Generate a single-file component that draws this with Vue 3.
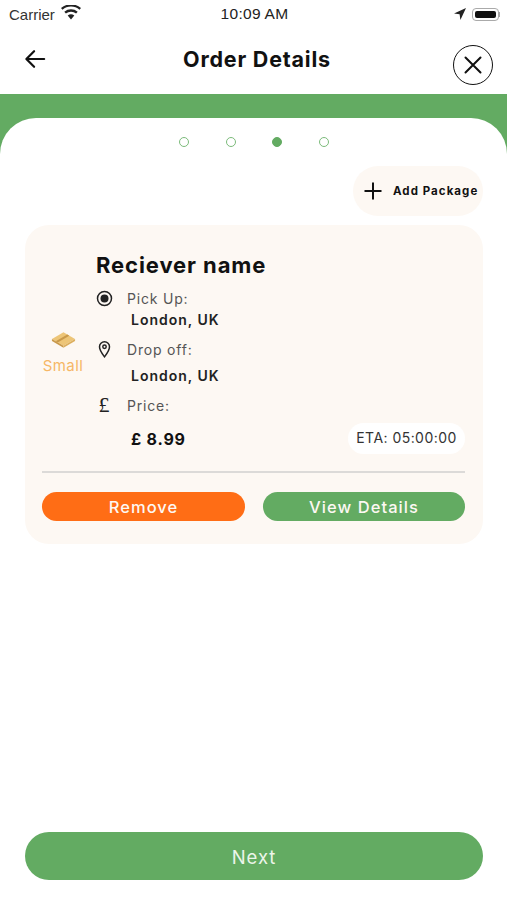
<script setup>
const dots = [false, false, true, false]
</script>

<template>
  <div class="screen">
    <div class="status">
      <div class="status-left">
        <span>Carrier</span>
        <svg class="wifi" width="20" height="15" viewBox="0 0 20 15"><path d="M10 14.500 6.700 10.600a5 5 0 0 1 6.600 0Z" fill="#222"/><path d="M4.900 8.600a7.800 7.800 0 0 1 10.200 0l1.600-1.900a10.400 10.400 0 0 0-13.400 0Z" fill="#222"/><path d="M1.500 4.700a13 13 0 0 1 17 0L20 3a15.400 15.400 0 0 0-20 0Z" fill="#222"/></svg>
      </div>
      <span class="time">10:09 AM</span>
      <div class="status-right">
        <svg width="14" height="14" viewBox="0 0 14 14"><path d="M13 1 1 6.600l5.600.7.8 5.700Z" fill="#222"/></svg>
        <div class="battery"><div class="battery-fill"></div></div>
        <div class="battery-cap"></div>
      </div>
    </div>

    <header class="nav">
      <svg class="back" width="22" height="22" viewBox="0 0 24 24" fill="none" stroke="#111" stroke-width="2.400" stroke-linecap="round" stroke-linejoin="round"><path d="M22 12H3M11 3.500 2.600 12l8.400 8.500"/></svg>
      <h1 class="title">Order Details</h1>
      <button class="close">
        <svg width="20" height="20" viewBox="0 0 20 20" fill="none" stroke="#111" stroke-width="2" stroke-linecap="round"><path d="M2.500 2.500l15 15M17.500 2.500l-15 15"/></svg>
      </button>
    </header>

    <main class="band">
      <div class="sheet">
        <div class="dots">
          <span v-for="(active, i) in dots" :key="i" class="dot" :class="{ active }"></span>
        </div>

        <div class="add-row">
          <button class="add">
            <svg width="20" height="20" viewBox="0 0 20 20" stroke="#111" stroke-width="2"><path d="M10 1.500v17M1.500 10h17"/></svg>
            <span>Add Package</span>
          </button>
        </div>

        <section class="card">
          <div class="card-top">
            <div class="size">
              <svg width="25" height="17" viewBox="0 0 26 17">
                <path d="M1 8 13 1l12 7-12 7Z" fill="#edc577"/>
                <path d="M1 8v2l12 7v-2Z" fill="#c9994a"/>
                <path d="M25 8v2l-12 7v-2Z" fill="#dcae5c"/>
                <path d="M7 11.500 19 4.500l-2-1.100L5 10.400Z" fill="#c9994a"/>
              </svg>
              <span>Small</span>
            </div>
            <div class="info">
              <h2 class="name">Reciever name</h2>
              <div class="row first">
                <svg width="17" height="17" viewBox="0 0 17 17"><circle cx="8.500" cy="8.500" r="7" fill="none" stroke="#222" stroke-width="1.500"/><circle cx="8.500" cy="8.500" r="4" fill="#222"/></svg>
                <span>Pick Up:</span>
              </div>
              <div class="value">London, UK</div>
              <div class="row drop">
                <svg width="17" height="18" viewBox="0 0 17 18" fill="none" stroke="#222" stroke-width="1.500"><path d="M8.500 16.800C6 13.500 3.500 10.500 3.500 6.800a5 5 0 0 1 10 0c0 3.700-2.500 6.700-5 10Z"/><circle cx="8.500" cy="6.800" r="1.700"/></svg>
                <span>Drop off:</span>
              </div>
              <div class="value second">London, UK</div>
              <div class="row price">
                <span class="pound">£</span>
                <span>Price:</span>
              </div>
              <div class="price-row">
                <strong>£ 8.99</strong>
                <span class="eta">ETA: 05:00:00</span>
              </div>
            </div>
          </div>
          <div class="divider"></div>
          <div class="actions">
            <button class="btn remove">Remove</button>
            <button class="btn view">View Details</button>
          </div>
        </section>

        <div class="spacer"></div>
        <button class="next">Next</button>
      </div>
    </main>
  </div>
</template>

<style>
html, body { margin: 0; background: #fff; }
</style>

<style scoped>
* { box-sizing: border-box; }
button { border: 0; padding: 0; font: inherit; }
.screen {
  width: 507px;
  height: 900px;
  display: flex;
  flex-direction: column;
  overflow: hidden;
  font-family: Inter, "Noto Sans", sans-serif;
  color: #111;
  background: #fff;
}
.status {
  height: 28px;
  flex: none;
  padding: 0 7px 0 9px;
  display: grid;
  grid-template-columns: 1fr auto 1fr;
  align-items: center;
  font-family: "Liberation Sans", sans-serif;
  font-size: 15px;
  color: #333;
}
.status-left { display: flex; align-items: center; gap: 6px; }
.wifi { margin-top: -3px; }
.time { color: #222; font-size: 15.500px; letter-spacing: 0.3px; }
.status-right { display: flex; align-items: center; justify-content: flex-end; }
.status-right svg { margin-right: 5px; }
.battery {
  width: 27px;
  height: 13px;
  padding: 2px;
  border: 1px solid #aaa;
  border-radius: 4px;
}
.battery-fill { height: 100%; background: #111; border-radius: 2px; }
.battery-cap { width: 1.500px; height: 5px; background: #aaa; }
.nav {
  height: 66px;
  flex: none;
  padding: 0 14px 0 21px;
  display: grid;
  grid-template-columns: 1fr auto 1fr;
  align-items: center;
}
.back { margin: -4px 0 0 3px; }
.title {
  margin: -4px 0 0;
  font-size: 21.500px;
  font-weight: 700;
  letter-spacing: 0.8px;
}
.close {
  width: 40px;
  height: 40px;
  margin-top: 8px;
  justify-self: end;
  border: 1.500px solid #111;
  border-radius: 50%;
  background: #fff;
  display: flex;
  align-items: center;
  justify-content: center;
}
.band {
  flex: 1;
  min-height: 0;
  padding-top: 24px;
  background: #63ab62;
  display: flex;
}
.sheet {
  flex: 1;
  background: #fff;
  border-radius: 36px 36px 0 0;
  padding: 0 24px 20px 25px;
  display: flex;
  flex-direction: column;
}
.dots {
  height: 48px;
  flex: none;
  display: flex;
  justify-content: center;
  align-items: center;
  gap: 36.500px;
}
.dot {
  width: 10px;
  height: 10px;
  border-radius: 50%;
  border: 1.500px solid #7cbb7b;
}
.dot.active { background: #63ab62; border-color: #63ab62; }
.add-row { display: flex; justify-content: flex-end; }
.add {
  width: 130px;
  height: 50px;
  border-radius: 25px;
  background: #fdf8f3;
  display: flex;
  align-items: center;
  padding-left: 10px;
  gap: 10px;
  font-size: 11.500px;
  font-weight: 700;
  letter-spacing: 1.050px;
  color: #111;
  white-space: nowrap;
}
.card {
  margin-top: 9px;
  background: #fdf8f3;
  border-radius: 24px;
  padding: 28px 18px 23px 17px;
}
.card-top { display: flex; gap: 12px; }
.size {
  width: 42px;
  flex: none;
  align-self: center;
  display: flex;
  flex-direction: column;
  align-items: center;
  gap: 8px;
  margin-top: -2px;
  font-size: 15px;
  letter-spacing: 0.4px;
  color: #f6b766;
  white-space: nowrap;
}
.info { flex: 1; min-width: 0; }
.name {
  margin: 0;
  height: 24px;
  line-height: 25px;
  font-size: 22px;
  font-weight: 700;
  letter-spacing: 0.9px;
}
.row {
  height: 20px;
  display: flex;
  align-items: center;
  font-size: 14px;
  letter-spacing: 0.8px;
  color: #555;
}
.row svg, .pound { width: 17px; margin-right: 14px; flex: none; }
.first { margin-top: 10px; height: 22px; }
.drop { margin-top: 9px; }
.price { margin-top: 9px; }
.pound {
  font-size: 22px;
  color: #222;
  text-align: center;
  font-family: "Liberation Serif", serif;
}
.value {
  height: 20px;
  line-height: 20px;
  margin-top: 1px;
  margin-left: 35px;
  font-size: 14px;
  font-weight: 600;
  letter-spacing: 1px;
  color: #222;
}
.value.second { margin-top: 7px; }
.price-row {
  margin-top: 8px;
  height: 31px;
  margin-left: 35px;
  display: flex;
  justify-content: space-between;
  align-items: center;
}
.price-row strong { font-size: 16px; font-weight: 700; letter-spacing: 0.8px; }
.eta {
  width: 117px;
  height: 31px;
  line-height: 30px;
  text-align: center;
  background: #fff;
  border-radius: 16px;
  font-size: 14px;
  letter-spacing: 0.45px;
  color: #333;
}
.divider { margin-top: 17px; height: 1.500px; background: #dcdad8; }
.actions { margin-top: 19px; display: flex; justify-content: space-between; }
.btn {
  height: 29px;
  padding-top: 1px;
  border-radius: 15px;
  color: #fdf8f3;
  font-size: 16.500px;
  font-weight: 500;
  letter-spacing: 1.050px;
}
.remove { width: 203px; background: #ff6d15; }
.view { width: 202px; background: #63ab62; }
.spacer { flex: 1; }
.next {
  height: 48px;
  flex: none;
  border-radius: 24px;
  background: #63ab62;
  color: #ecf5ea;
  font-size: 18.500px;
  font-weight: 400;
  line-height: 50px;
  letter-spacing: 0.9px;
}
</style>
